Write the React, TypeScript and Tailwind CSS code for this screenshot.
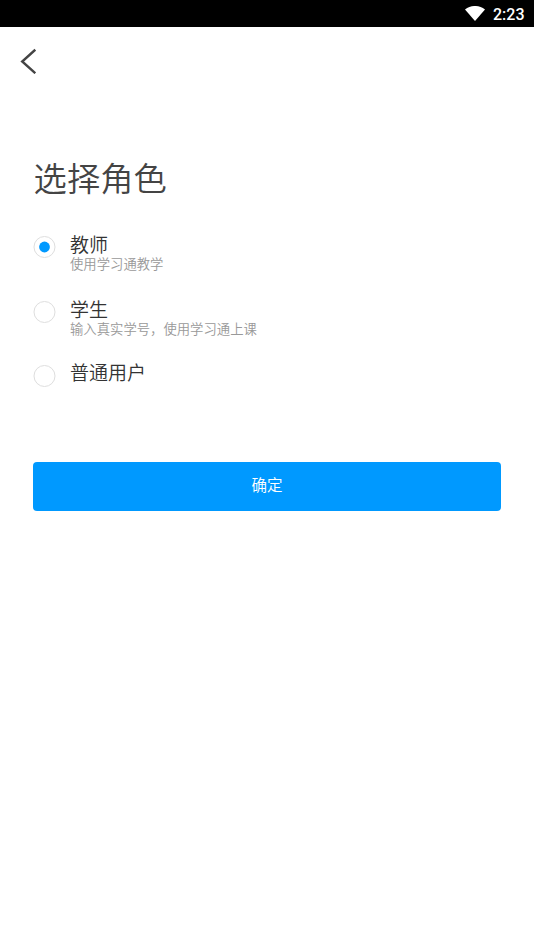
import React, { useState } from 'react';

interface Role {
  id: string;
  title: string;
  description?: string;
}

const roles: Role[] = [
  { id: 'teacher', title: '教师', description: '使用学习通教学' },
  { id: 'student', title: '学生', description: '输入真实学号，使用学习通上课' },
  { id: 'user', title: '普通用户' }
];

interface RoleOptionProps {
  role: Role;
  selected: boolean;
  onSelect: () => void;
}

function StatusBar() {
  return (
    <div className="flex h-[27px] items-center justify-end bg-black pr-[9.5px] text-white">
      <svg className="mr-2 mb-px h-[15px] w-5" viewBox="0 0 20 15" fill="currentColor">
        <path d="M0 3.5C6-1.2 14-1.2 20 3.5L10 15Z" />
      </svg>
      <span className="pt-0.5 text-base leading-none font-medium">2:23</span>
    </div>
  );
}

function RoleOption({ role, selected, onSelect }: RoleOptionProps) {
  return (
    <button
      type="button"
      role="radio"
      aria-checked={selected}
      onClick={onSelect}
      className="flex h-[64.5px] items-start text-left"
    >
      <svg className="mt-0.5 h-[22px] w-[23px]" viewBox="0 0 23 22" fill="none">
        <circle cx="11.5" cy="11" r="10.5" stroke="#dedede" />
        {selected && <circle cx="11.5" cy="11" r="5.4" fill="#0099ff" />}
      </svg>
      <span className={role.description ? 'ml-3.5 flex flex-col' : 'ml-3.5 -mt-px flex flex-col'}>
        <span className="text-[19px] leading-[23px] text-[#333]">{role.title}</span>
        {role.description && (
          <span className="text-[13.35px] leading-4 text-[#999]">{role.description}</span>
        )}
      </span>
    </button>
  );
}

function App() {
  const [selectedRole, setSelectedRole] = useState('teacher');

  return (
    <div className="min-h-screen bg-white font-[Roboto,'Noto_Sans_CJK_SC',sans-serif] [font-weight:350]">
      <StatusBar />
      <header className="flex h-[67px] items-center pl-5">
        <button type="button" aria-label="返回">
          <svg className="h-[26px] w-4" viewBox="0 0 16 26" fill="none" stroke="#444" strokeWidth="2.4">
            <path d="M15.3 1.7L2.2 13.5L15.3 25.2" />
          </svg>
        </button>
      </header>
      <main className="px-[33px] pt-[62px]">
        <h1 className="pl-[0.6px] text-[33.3px] leading-[48px] text-[#444]">选择角色</h1>
        <div role="radiogroup" className="mt-[30px] flex flex-col">
          {roles.map((role) => (
            <RoleOption
              key={role.id}
              role={role}
              selected={selectedRole === role.id}
              onSelect={() => setSelectedRole(role.id)}
            />
          ))}
        </div>
        <button
          type="button"
          className="mt-[34.2px] flex h-[49px] w-full items-center justify-center rounded-[4px] bg-[#0099ff] pb-px text-[15.5px] leading-5 text-white"
        >
          确定
        </button>
      </main>
    </div>
  );
}

export default App;
